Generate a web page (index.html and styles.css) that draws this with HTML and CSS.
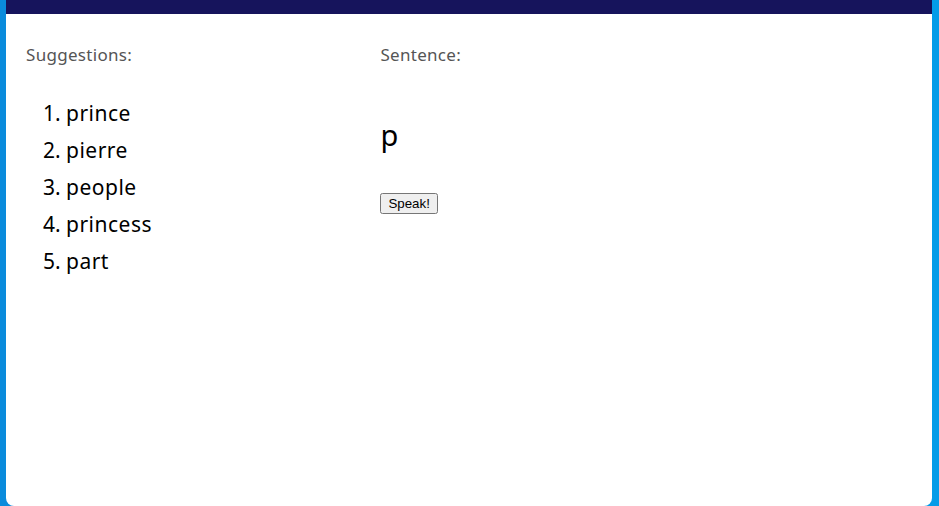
FILE: index.html
```html
<!DOCTYPE html>
<html>
<head>
<meta charset="utf-8">
<link rel="stylesheet" href="styles.css">
</head>
<body>
<div class="card">
  <div class="topbar"></div>
  <div class="content">
    <section class="col col-left">
      <div class="label">Suggestions:</div>
      <ol class="suggestions">
        <li>prince</li>
        <li>pierre</li>
        <li>people</li>
        <li>princess</li>
        <li>part</li>
      </ol>
    </section>
    <section class="col col-right">
      <div class="label">Sentence:</div>
      <div class="sentence">p</div>
      <button class="speak">Speak!</button>
    </section>
  </div>
</div>
</body>
</html>
```
FILE: styles.css
```css
html, body {
  margin: 0;
  height: 100%;
}
body {
  background: linear-gradient(90deg, #0a8bdc 0%, #0996e2 50%, #049ce8 100%);
  padding: 0 7px 0 6px;
  box-sizing: border-box;
  overflow: hidden;
  font-family: "Noto Sans", sans-serif;
}
.card {
  background: #fff;
  height: 506px;
  border-radius: 0 0 8px 8px;
  overflow: hidden;
}
.topbar {
  height: 14px;
  background: #16145c;
}
.content {
  display: grid;
  grid-template-columns: 40% 60%;
  padding: 28px 20px 0 20px;
}
.label {
  font-size: 17px;
  letter-spacing: 0.3px;
  color: #555;
  line-height: 26px;
}
.suggestions {
  margin: 27px 0 0 0;
  padding-left: 40px;
  font-size: 21px;
  letter-spacing: 0.5px;
  line-height: 37px;
  color: #000;
}
.suggestions li::marker {
  letter-spacing: 0;
}
.sentence {
  font-size: 29px;
  line-height: 40px;
  margin-top: 47px;
  color: #000;
}
.speak {
  margin-top: 38px;
  font-family: "Liberation Sans", Arial, sans-serif;
  font-size: 13.333px;
  padding: 1px 6px;
}
```
